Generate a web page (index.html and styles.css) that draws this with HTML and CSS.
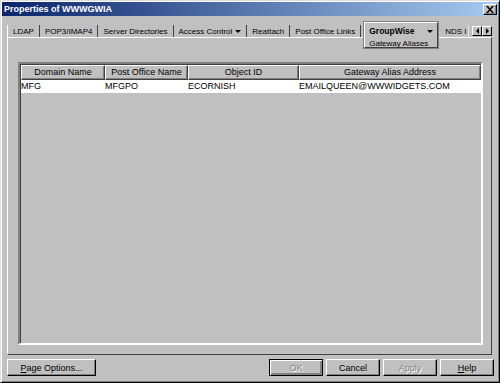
FILE: index.html
```html
<!DOCTYPE html>
<html lang="en">
<head>
    <meta charset="UTF-8">
    <title>Properties of WWWGWIA</title>
    <link rel="stylesheet" href="styles.css">
</head>
<body>
    <div class="window">
        <div class="titlebar">
            <span class="title">Properties of WWWGWIA</span>
            <span class="close">
                <svg width="8" height="7" viewBox="0 0 8 7"><path d="M0 0h2l2 2.5L6 0h2L5 3.5 8 7H6L4 4.5 2 7H0l3-3.5z" fill="#000"/></svg>
            </span>
        </div>

        <div class="tabstrip">
            <div class="tab">LDAP</div>
            <div class="tab">POP3/IMAP4</div>
            <div class="tab">Server Directories</div>
            <div class="tab">Access Control <span class="caret"></span></div>
            <div class="tab">Reattach</div>
            <div class="tab">Post Office Links</div>
            <div class="tab-active">
                <div class="tab-active-main">
                    <b>GroupWise</b>
                    <span class="caret"></span>
                </div>
                <div class="subtab">Gateway Aliases</div>
            </div>
            <div class="tab tab-clipped">NDS I</div>
            <div class="scroller">
                <span class="scroll-btn"><span class="arrow-left"></span></span>
                <span class="scroll-btn"><span class="arrow-right"></span></span>
            </div>
        </div>

        <div class="panel">
            <div class="list">
                <div class="list-head">
                    <div class="head-cell">Domain Name</div>
                    <div class="head-cell">Post Office Name</div>
                    <div class="head-cell">Object ID</div>
                    <div class="head-cell">Gateway Alias Address</div>
                </div>
                <div class="list-row">
                    <div class="cell">MFG</div>
                    <div class="cell">MFGPO</div>
                    <div class="cell">ECORNISH</div>
                    <div class="cell">EMAILQUEEN@WWWIDGETS.COM</div>
                </div>
            </div>
        </div>

        <div class="buttons">
            <button class="btn btn-wide"><u>P</u>age Options...</button>
            <span class="spacer"></span>
            <button class="btn btn-default" disabled>OK</button>
            <button class="btn">Cancel</button>
            <button class="btn" disabled>Apply</button>
            <button class="btn"><u>H</u>elp</button>
        </div>
    </div>
</body>
</html>
```

FILE: styles.css
```css
* {
    margin: 0;
    padding: 0;
    box-sizing: border-box;
}

body {
    font-family: "Liberation Sans", Arial, sans-serif;
    font-size: 9px;
    color: #000;
    background: #c0c0c0;
}

.window {
    width: 500px;
    height: 383px;
    display: flex;
    flex-direction: column;
    background: #c0c0c0;
    border: 1px solid;
    border-color: #dfdfdf #000 #000 #dfdfdf;
    box-shadow: inset 1px 1px #fff, inset -1px -1px #808080;
    padding: 1px 1px 6px 1px;
}

.titlebar {
    height: 14px;
    display: flex;
    align-items: center;
    justify-content: space-between;
    padding: 0 1px 0 2px;
    background: linear-gradient(to right, #0a246a, #a6caf0);
}

.title {
    color: #fff;
    font-weight: bold;
    font-size: 9px;
}

.close {
    width: 14px;
    height: 11px;
    display: flex;
    align-items: center;
    justify-content: center;
    background: #c0c0c0;
    border: 1px solid;
    border-color: #fff #000 #000 #fff;
    box-shadow: inset -1px -1px #808080;
}

/* tabs */
.tabstrip {
    height: 15px;
    margin: 6px 6px 0 5px;
    display: flex;
    align-items: flex-end;
    font-size: 8px;
}

.tab {
    height: 12px;
    display: flex;
    align-items: center;
    gap: 3px;
    padding: 0 5px;
    border-left: 1px solid #fff;
    border-right: 1px solid #404040;
    white-space: nowrap;
}

.tab + .tab {
    border-left: none;
}

.caret {
    width: 0;
    height: 0;
    border-left: 3px solid transparent;
    border-right: 3px solid transparent;
    border-top: 3px solid #000;
}

.tab-active {
    position: relative;
    z-index: 1;
    align-self: flex-start;
    width: 74px;
    height: 26px;
    margin: 0 3px -11px 3px;
    padding: 3px 4px 0 4px;
    background: #c0c0c0;
    border: 1px solid;
    border-color: #fff #404040 #404040 #fff;
    box-shadow: 0 0 0 1px #808080;
}

.tab-active-main {
    display: flex;
    align-items: center;
    justify-content: space-between;
    font-size: 8.5px;
}

.subtab {
    margin-top: 3px;
}

.tab-clipped {
    width: 28px;
    padding: 0 0 0 4px;
    border-right: 1px solid #e0e0e0;
    border-left: none;
}

.scroller {
    display: flex;
    margin: 0 0 1px auto;
}

.scroll-btn {
    width: 10px;
    height: 10px;
    display: flex;
    align-items: center;
    justify-content: center;
    border: 1px solid;
    border-color: #fff #000 #000 #fff;
}

.arrow-left {
    border-top: 3px solid transparent;
    border-bottom: 3px solid transparent;
    border-right: 3px solid #000;
}

.arrow-right {
    border-top: 3px solid transparent;
    border-bottom: 3px solid transparent;
    border-left: 3px solid #000;
}

/* page */
.panel {
    flex: 1;
    display: flex;
    margin: 0 6px 0 5px;
    padding: 24px 8px 9px 10px;
    border: 1px solid;
    border-color: #fff #404040 #404040 #fff;
}

.list {
    flex: 1;
    border: 2px solid;
    border-color: #808080 #fff #fff #808080;
    box-shadow: inset 1px 1px #404040;
    padding: 1px 0 0 1px;
}

.list-head,
.list-row {
    display: grid;
    grid-template-columns: 84px 83px 111px 182px;
}

.head-cell {
    height: 15px;
    line-height: 13px;
    text-align: center;
    border: 1px solid;
    border-color: #fff #404040 #404040 #fff;
    box-shadow: inset -1px -1px #808080;
}

.list-row {
    background: #fff;
    height: 13px;
    line-height: 13px;
}

.cell {
    padding-left: 0;
}

/* buttons */
.buttons {
    display: flex;
    gap: 3px;
    margin: 4px 4px 0 5px;
}

.spacer {
    flex: 1;
}

.btn {
    width: 54px;
    height: 17px;
    font-family: inherit;
    font-size: 9px;
    color: #000;
    background: #c0c0c0;
    border: 1px solid;
    border-color: #fff #000 #000 #fff;
    box-shadow: inset -1px -1px #808080;
}

.btn-wide {
    width: 89px;
}

.btn:disabled {
    color: #808080;
    text-shadow: 1px 1px #fff;
}

.btn-default {
    border-color: #000;
    box-shadow: inset 1px 1px #fff, inset -2px -2px #808080;
}
```
